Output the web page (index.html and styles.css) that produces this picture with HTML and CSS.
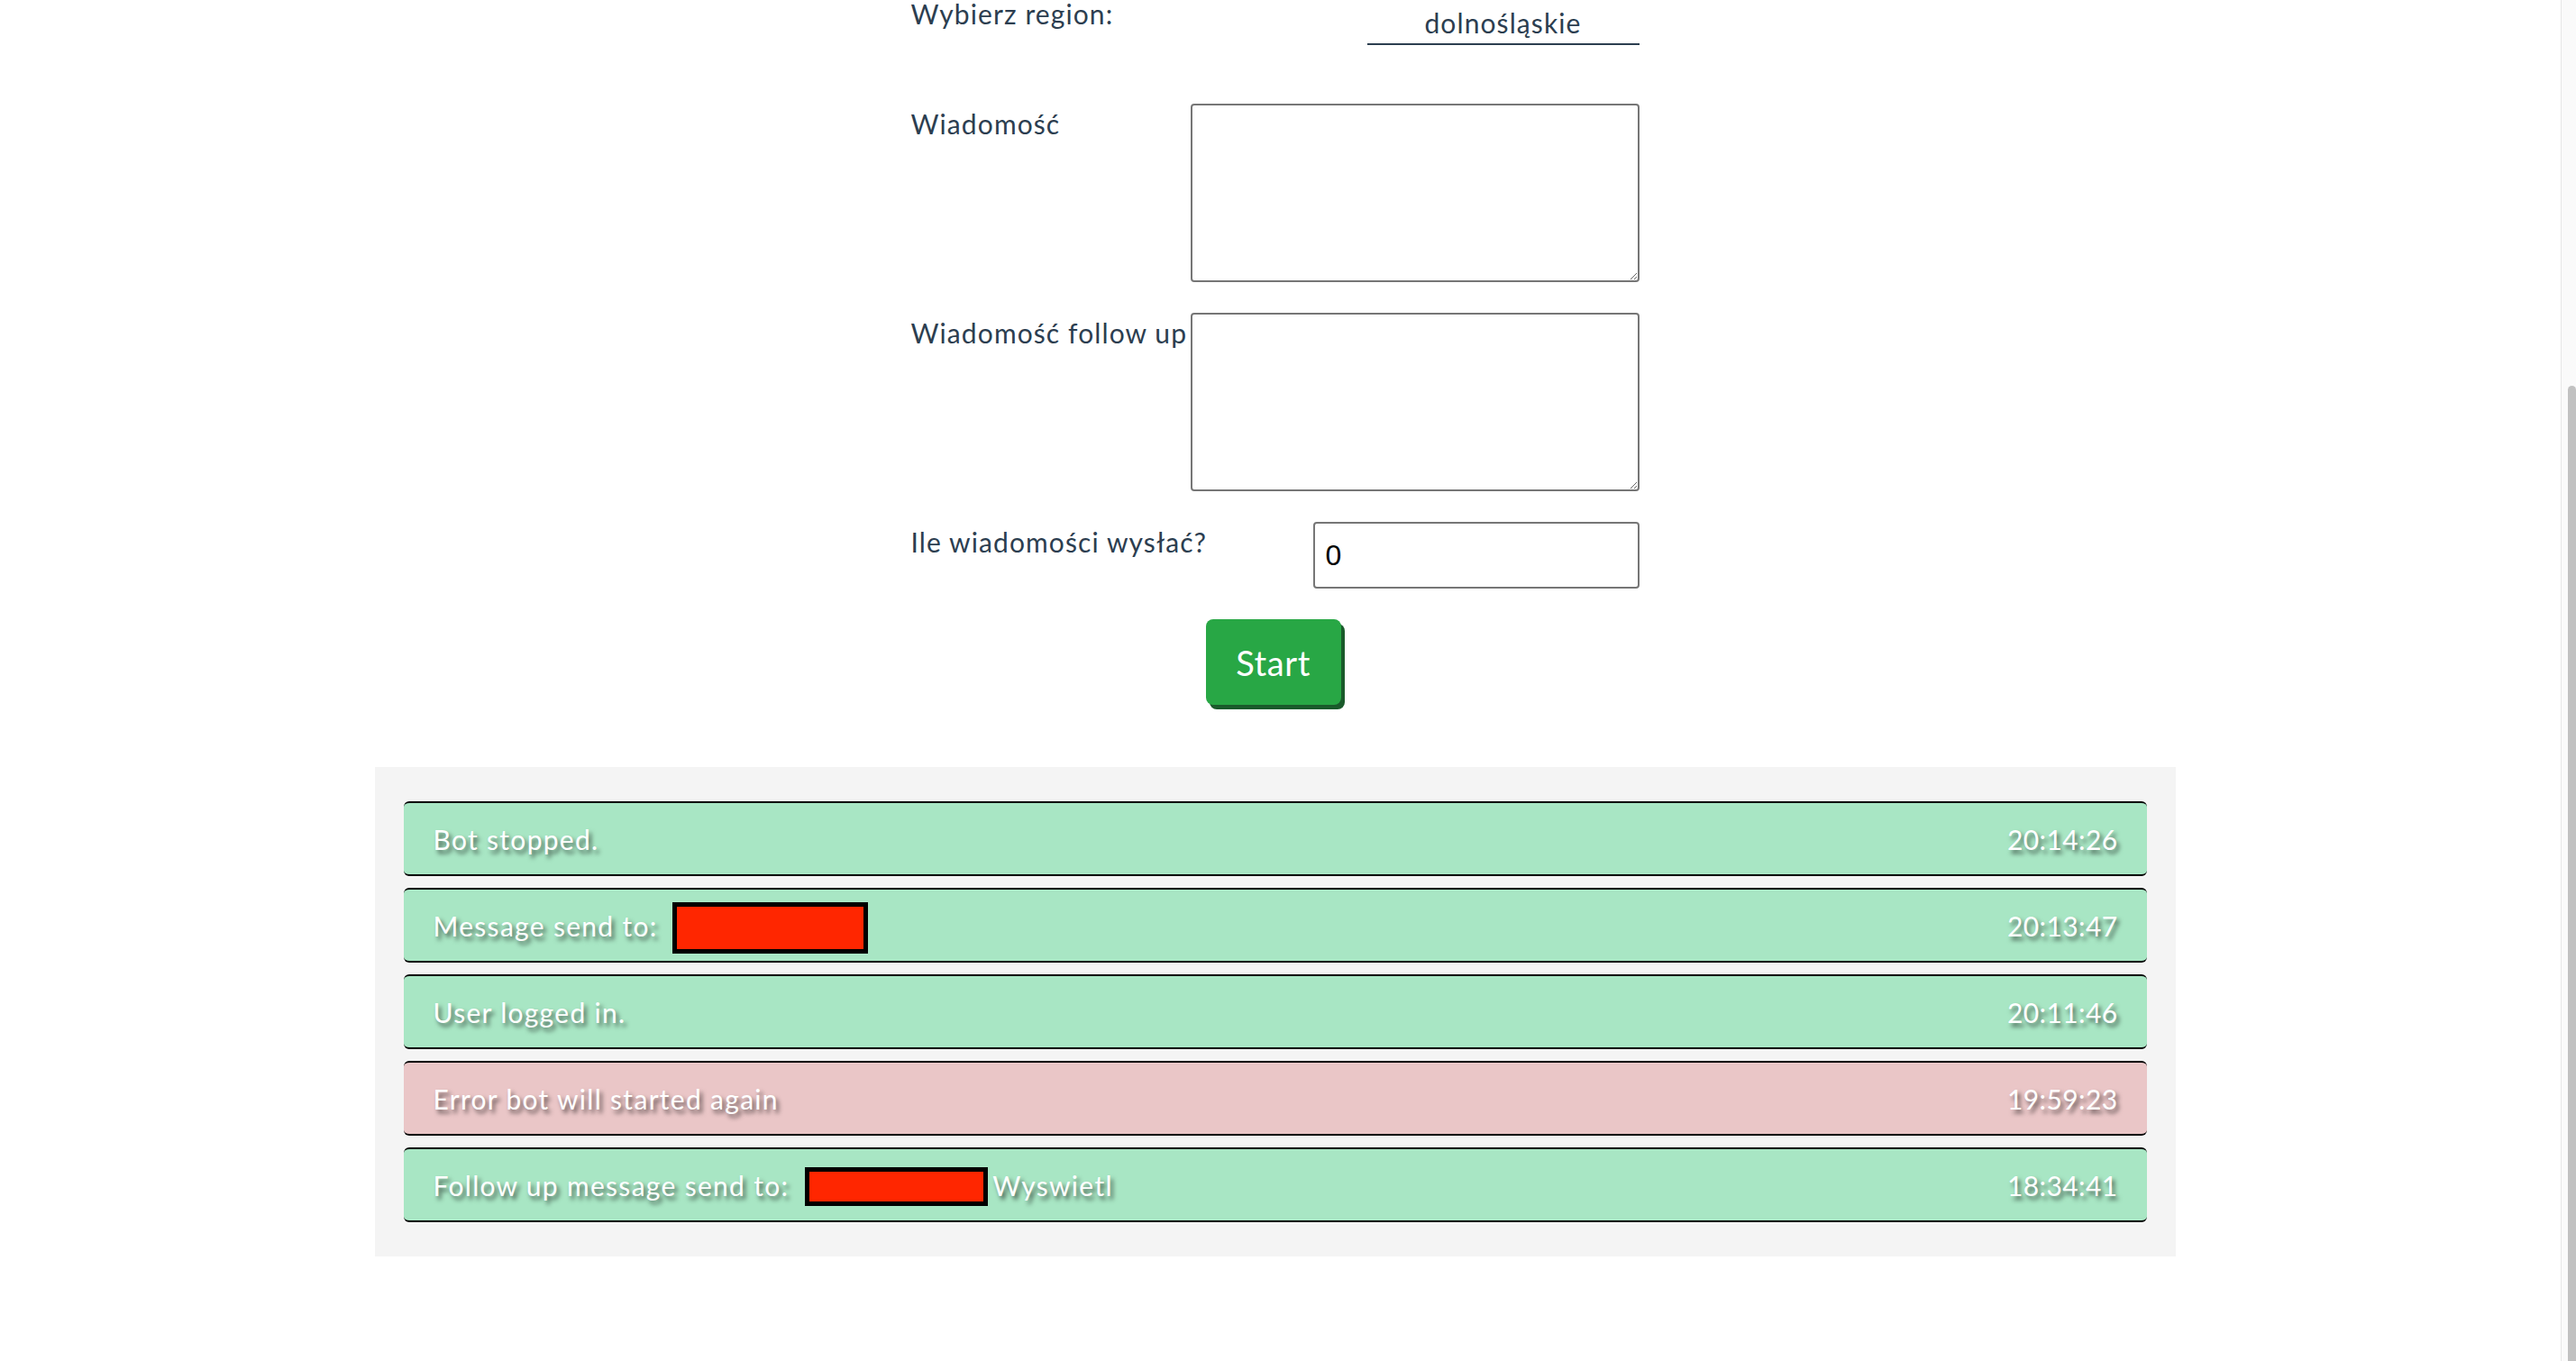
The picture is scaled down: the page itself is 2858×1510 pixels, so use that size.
FILE: index.html
```html
<!DOCTYPE html>
<html lang="pl">
<head>
<meta charset="utf-8">
<title>Bot</title>
<link rel="stylesheet" href="styles.css">
</head>
<body>
<div class="page">
  <main class="main">
    <form class="form">
      <div class="row row-region">
        <label class="label" for="region">Wybierz region:</label>
        <select id="region" class="region-select">
          <option>dolnośląskie</option>
        </select>
      </div>
      <div class="row">
        <label class="label" for="msg">Wiadomość</label>
        <textarea id="msg" class="textarea"></textarea>
      </div>
      <div class="row">
        <label class="label" for="msg2">Wiadomość follow up</label>
        <textarea id="msg2" class="textarea"></textarea>
      </div>
      <div class="row">
        <label class="label" for="count">Ile wiadomości wysłać?</label>
        <input id="count" class="number-input" type="text" value="0">
      </div>
      <div class="row row-center">
        <button type="button" class="start-btn">Start</button>
      </div>
    </form>

    <section class="log">
      <div class="entry">
        <span class="entry-text">Bot stopped.</span>
        <span class="entry-time">20:14:26</span>
      </div>
      <div class="entry">
        <span class="entry-text">Message send to:<span class="redacted redacted-lg"></span></span>
        <span class="entry-time">20:13:47</span>
      </div>
      <div class="entry">
        <span class="entry-text">User logged in.</span>
        <span class="entry-time">20:11:46</span>
      </div>
      <div class="entry entry-error">
        <span class="entry-text">Error bot will started again</span>
        <span class="entry-time">19:59:23</span>
      </div>
      <div class="entry">
        <span class="entry-text">Follow up message send to:<span class="redacted redacted-sm"></span>Wyswietl</span>
        <span class="entry-time">18:34:41</span>
      </div>
    </section>
  </main>
  <div class="scrollbar" aria-hidden="true">
    <div class="scrollbar-thumb"></div>
  </div>
</div>
</body>
</html>
```
FILE: styles.css
```css
html, body {
  margin: 0;
  padding: 0;
  background: #ffffff;
}

body {
  font-family: Lato, "Noto Sans", sans-serif;
  color: #2c3e50;
  height: 1510px;
  overflow: hidden;
}

.page {
  display: flex;
  height: 100%;
}

.main {
  flex: 1;
  overflow: hidden;
  padding-right: 12px;
  display: flex;
  flex-direction: column;
  align-items: center;
}

/* ---------- form ---------- */
.form {
  width: 808px;
  margin-top: -7px;
  display: flex;
  flex-direction: column;
  gap: 34px;
}

.row {
  display: flex;
  justify-content: space-between;
  align-items: flex-start;
}

.row-region {
  margin-bottom: 31px;
}

.row-center {
  justify-content: center;
  padding-right: 4px;
}

.label {
  font-size: 30px;
  line-height: 44px;
  letter-spacing: 1.1px;
  white-space: nowrap;
  flex-shrink: 0;
}

.region-select {
  appearance: none;
  -webkit-appearance: none;
  width: 302px;
  height: 57px;
  box-sizing: border-box;
  padding: 8px 0 0;
  border: none;
  border-bottom: 2px solid #2c3e50;
  border-radius: 0;
  background: transparent;
  color: #2c3e50;
  font-family: Lato, "Noto Sans", sans-serif;
  font-size: 30px;
  letter-spacing: 1.1px;
  text-align: center;
  text-align-last: center;
  margin-top: 0;
}

.textarea {
  width: 498px;
  height: 198px;
  box-sizing: border-box;
  border: 2px solid #767676;
  border-radius: 4px;
  background: #fff;
  margin: 0;
}

.number-input {
  width: 362px;
  height: 74px;
  box-sizing: border-box;
  border: 2px solid #767676;
  border-radius: 4px;
  padding: 0 12px;
  margin: 0;
  font-family: "Liberation Sans", Arial, sans-serif;
  font-size: 32px;
  color: #000;
}

.start-btn {
  width: 150px;
  height: 95px;
  border: none;
  border-radius: 8px;
  background: #28a745;
  box-shadow: 4px 5px 0 #1a5a2b;
  color: #fff;
  font-family: Lato, "Noto Sans", sans-serif;
  font-size: 38px;
  letter-spacing: 0.6px;
  padding: 0;
  cursor: pointer;
}

/* ---------- log ---------- */
.log {
  width: 1998px;
  box-sizing: border-box;
  margin-top: 69px;
  padding: 38px 32px;
  background: #f4f4f4;
  display: flex;
  flex-direction: column;
  gap: 13px;
}

.entry {
  height: 83px;
  box-sizing: border-box;
  padding: 0 32px 0 33px;
  display: flex;
  align-items: center;
  justify-content: space-between;
  background: #a8e6c4;
  border-top: 2px solid #000;
  border-bottom: 2px solid #000;
  border-radius: 6px;
  color: #fff;
  font-size: 30px;
  text-shadow: 3px 4px 5px rgba(0, 0, 0, 0.6);
  white-space: nowrap;
}

.entry-error {
  background: #eac6c7;
}

.entry-text {
  display: flex;
  align-items: center;
  letter-spacing: 1.3px;
}

.entry-time {
  letter-spacing: 0.4px;
}

.redacted {
  display: inline-block;
  box-sizing: border-box;
  background: #ff2600;
  border: 5px solid #000;
}

.redacted-lg {
  width: 217px;
  height: 57px;
  margin: 6px 0 0 16px;
}

.redacted-sm {
  width: 203px;
  height: 43px;
  margin: 4px 5px 0 18px;
}

/* ---------- faux window scrollbar ---------- */
.scrollbar {
  width: 17px;
  flex-shrink: 0;
  border-left: 1px solid #e6e6e6;
  background: #fafafa;
  display: flex;
  flex-direction: column;
  padding: 428px 0 0 7px;
  box-sizing: border-box;
}

.scrollbar-thumb {
  flex: 1;
  background: #c1c1c1;
  border-radius: 6px 6px 0 0;
}
```
